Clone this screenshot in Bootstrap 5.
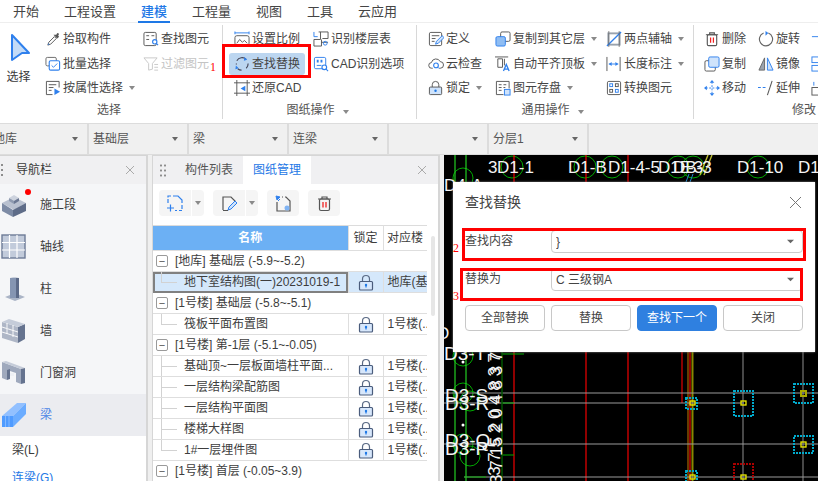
<!DOCTYPE html>
<html lang="zh">
<head>
<meta charset="utf-8">
<title>查找替换</title>
<link rel="stylesheet" href="https://cdn.jsdelivr.net/npm/bootstrap@5.3.0/dist/css/bootstrap.min.css">
<style>
html,body{width:818px;height:481px;overflow:hidden;margin:0}
body{font-family:"Liberation Sans","Noto Sans CJK SC",sans-serif;font-size:12px;color:#3a3a3a;background:#f0f0f0;line-height:1.2}
.app{width:818px;height:481px;overflow:hidden;position:relative}
.defs{position:absolute}
.rtabs{height:23px;background:#fff;padding-left:13px;gap:25px;font-size:13px;border-bottom:1px solid #eee}
.rtab{display:flex;align-items:center;height:23px;color:#444}
.rtab.on{color:#1e78e6;box-shadow:inset 0 -2px 0 #1e78e6;font-weight:500;padding:0 3px;margin:0 -3px}
.ribbon{height:100px;background:#fff;position:relative;overflow:hidden}
.rgroup{flex:none;height:94px;margin-top:2px;position:relative;display:flex;flex-direction:column;border-right:1px solid #d8d8d8}
.rgrid{display:grid;height:73px;grid-template-rows:repeat(3,24.5px);padding-top:2px}
.g1{width:223px}.g1 .rgrid{grid-template-columns:45px 98px 1fr}
.g2{width:194px}.g2 .rgrid{grid-template-columns:79px 1fr;padding-left:11px}
.g3{width:277px}.g3 .rgrid{grid-template-columns:67px 111px 1fr;padding-left:11px}
.g4{width:140px;border-right:0}.g4 .rgrid{grid-template-columns:54px 53px 1fr;padding-left:10px}
.c2r3{grid-column:2;grid-row:3}.c3r1{grid-column:3;grid-row:1}.c3r2{grid-column:3;grid-row:2}
.ritem{display:flex;align-items:center;white-space:nowrap;gap:2px;color:#444}
.ritem svg{flex:none;width:16px;height:16px}
.ritem.off{color:#c4c4c4}
.ritem.hit{background:#bcd6f0;border-radius:3px;margin:1px 0 1px -5px;padding-left:5px;width:76px}
.caret{display:inline-block;width:0;height:0;border:3.5px solid transparent;border-top:4px solid #8a8a8a;border-bottom:0;margin-left:4px}
.rlabel{text-align:center;height:18px;line-height:18px;margin-top:3px;color:#555;padding-right:4px}
.g3 .rlabel{padding-right:5px}
.g4 .rlabel{text-align:right;padding-right:18px}
.bigsel{display:flex;flex-direction:column;align-items:center;grid-row:1 / 4;width:37px}
.bigsel svg{width:24px;height:30px;margin-top:6px;margin-bottom:7px}
.rbox{position:absolute;border:3px solid #f00;pointer-events:none}
.rbox-a{left:222px;top:21px;width:89px;height:34px}
.rbox-b{left:9px;top:46px;width:344px;height:33px}
.rbox-c{left:7px;top:86px;width:343px;height:33px}
.rnum{position:absolute;color:#f00;font-family:"Liberation Serif",serif;font-size:12px;line-height:1}
.rnum-a{left:210px;top:38px}.rnum-b{left:0;top:60px}.rnum-c{left:0;top:108px}
.layerbar{height:32px;background:#f0f0f0;margin-left:-11px;width:840px;border-top:1px solid #dcdcdc;border-bottom:1px solid #dcdcdc}
.layercell{flex:none;width:100px;height:30px;border-right:2px solid #dcdcdc;padding:0 4px;display:flex;align-items:center;justify-content:space-between;color:#555}
.layercell .caret{margin-right:5px;border-top-color:#666}
.main{height:326px;background:#efefef}
.navpane{width:148px;flex:none;background:#f5f6f8;border-top:1px solid #d4d4d4;border-right:2px solid #d6d6d6;overflow:hidden}
.phead{height:28px;background:#f0f0f2;position:relative;display:flex;align-items:center}
.grip{width:2px;height:2px;background:#8d8d8d;box-shadow:0 5px 0 #8d8d8d,0 -5px 0 #8d8d8d;margin-left:1px}
.navtitle{margin-left:13px}
.phead-x{margin-left:auto;width:10px;height:10px;margin-right:11px}
.navrow{height:42px;display:flex;align-items:center;color:#3c3c3c;position:relative}
.navrow svg{width:26px;height:26px;margin-left:1px;margin-right:13px;flex:none}
.navrow svg.reddot{position:absolute;left:25px;top:5px;width:6px;height:6px;margin:0}
.navrow.on{background:#ebecf0;color:#4d86e6}
.subrow{height:28px;background:#fff;display:flex;align-items:center;padding-left:12px}
.sublist{background:#fff;height:100px}
.sublink{color:#1e78e6}
.midpane{width:288px;margin-left:4px;flex:none;background:#fff;border:1px solid #d6d6d6;border-bottom:0;border-right:2px solid #d6d6d6;overflow:hidden;position:relative}
.midtab{height:28px;display:flex;align-items:center;justify-content:center;width:68px;color:#555}
.midtab.on{background:#fff;color:#1e78e6}
.grip2{width:7px;height:14px;margin:0 9px 0 6px;background-image:radial-gradient(circle,#8d8d8d 1px,transparent 1.2px);background-size:4px 5px}
.tools{height:41px;padding:6px 0 0 6px;gap:9px}
.toolbtn{height:26px;width:32px;padding:0;background:#f5f5f5;border:0;border-radius:4px;display:flex;align-items:center;justify-content:center}
.toolbtn svg{width:17px;height:17px}
.toolsplit{width:13px;border-left:1px solid #fff;border-radius:0 4px 4px 0}
.toolsplit .caret{margin:0}
.btn-group .toolbtn.first{border-radius:4px 0 0 4px}
.scrollthumb{position:absolute;right:3px;top:80px;width:4px;height:80px;background:#e6e6e6;border-radius:2px}
.treewrap{width:274px;overflow:hidden}
.tree{table-layout:fixed;width:274px;margin:0;font-size:12px;color:#3d3d3d;border-color:#dcdcdc;--bs-table-bg:transparent}
.tree col:nth-child(1){width:195px}.tree col:nth-child(2){width:35px}.tree col:nth-child(3){width:44px}
.tree td,.tree th{height:21px;padding:0 0 0 4px;vertical-align:middle;white-space:nowrap;overflow:hidden;border-width:0 1px 1px 0;border-color:#dedede;font-weight:400;line-height:20px}
.tree th{height:25px;text-align:center;padding:0}
.tree th.nm{background:#6cb0f4;color:#fff;font-weight:700}
.tree .grp td{padding-left:22px;position:relative;border-right:0}
.tree .grp td::before{content:"−";position:absolute;left:3px;top:4px;width:12px;height:12px;border:1px solid #9a9a9a;border-radius:2px;text-align:center;line-height:10px;font-size:11px;color:#555}
.tree .kid td.nm{padding-left:31px;position:relative}
.tree .kid td.nm::before{content:"";position:absolute;left:8px;top:-1px;bottom:0;border-left:1px solid #d2d2d2}
.tree .kid td.nm::after{content:"";position:absolute;left:8px;width:16px;top:10px;border-top:1px solid #d2d2d2}
.tree .kid.last td.nm::before{bottom:10px}
.tree .sel td{background:#d5e8fb}
.tree .sel td.nm{outline:2px solid #808080;outline-offset:-2px}
.tree td.lk{text-align:center;padding:0}
.tree td.lk svg{width:16px;height:17px;vertical-align:middle}
.cad{flex:1 1 auto;margin-left:4px;background:#000;position:relative;overflow:hidden}
.cad>svg{display:block;width:374px;height:326px}
.cad text{font-family:"Liberation Sans",sans-serif;fill:#f4f4f4}
.dialog{position:absolute;left:9px;top:27px;width:362px;height:170px;background:#fff;border:0;border-radius:0;box-shadow:0 0 2px #888;padding:0 12px}
.dhead{height:40px;display:flex;align-items:center;justify-content:space-between;font-size:14px;color:#444}
.dhead svg{width:13px;height:13px;margin-right:1px}
.dgrid{display:grid;grid-template-columns:repeat(4,80px);column-gap:6px;margin-top:8px}
.dlabel{height:23px;display:flex;align-items:center;color:#444}
.dsel{grid-column:2 / 5;height:23px;padding:0 0 0 4px;font-size:12px;color:#444;border-color:#ccc;border-radius:4px;line-height:20px;font-family:inherit;background-size:7px 7px;background-position:right 8px center;background-image:url("data:image/svg+xml,%3Csvg xmlns='http://www.w3.org/2000/svg' viewBox='0 0 8 8'%3E%3Cpath d='M0 2h8L4 6z' fill='%23666'/%3E%3C/svg%3E")}
.dbtn{height:26px;padding:0;font-size:12px;border-radius:4px;color:#444;border:1px solid #c8c8c8;background:#fff}
.dbtn.go{background:#2f80e0;border-color:#2f80e0;color:#fff}
.gap15{grid-column:1 / 5;height:15px}
.gap14{grid-column:1 / 5;height:14px}
</style>
</head>
<body>
<svg class="defs" width="0" height="0">
<defs>
<symbol id="lock" viewBox="0 0 16 17"><path d="M4.5 8V5a3.5 3.5 0 0 1 7 0v3" fill="none" stroke="#5a6a85" stroke-width="1.2"/><rect x="1.5" y="7.5" width="13" height="8.5" rx="1" fill="#d7e7fb" stroke="#4a5c7c" stroke-width="1.2"/><circle cx="8" cy="11" r="1.2" fill="#1e78e6"/><rect x="7.4" y="11" width="1.2" height="2.5" fill="#1e78e6"/></symbol>
<symbol id="trash" viewBox="0 0 17 17"><path d="M2 4h13M6 4V2h5v2" fill="none" stroke="#555" stroke-width="1.2"/><rect x="3.5" y="4" width="10" height="11.5" rx="1.5" fill="none" stroke="#555" stroke-width="1.2"/><path d="M7 7v5.5M10 7v5.5" stroke="#e22" stroke-width="1.3"/></symbol>
</defs>
</svg>
<div class="app">
<div class="rtabs d-flex">
<div class="rtab">开始</div><div class="rtab">工程设置</div><div class="rtab on">建模</div><div class="rtab">工程量</div><div class="rtab">视图</div><div class="rtab">工具</div><div class="rtab">云应用</div>
</div>

<div class="ribbon d-flex">
 <div class="rgroup g1">
  <div class="rgrid">
   <div class="bigsel"><svg viewBox="0 0 24 30"><path d="M5 2 22 20H15L5 27z" fill="#c3dbf7" stroke="#2f80ed" stroke-width="2" stroke-linejoin="round"/></svg><span>选择</span></div>
   <div class="ritem"><svg viewBox="0 0 17 17"><path d="M3 15l1-3 6-6 2 2-6 6z" fill="#fff" stroke="#555"/><path d="M9 4l4 4 2-2-1-1 1-2-2-1-1 2z" fill="#555"/><path d="M3 15l2-1-1-1z" fill="#2f80ed"/></svg><span>拾取构件</span></div>
   <div class="ritem"><svg viewBox="0 0 17 17"><rect x="1" y="1.5" width="11" height="9" rx="1.5" fill="none" stroke="#666"/><rect x="4.5" y="5" width="11" height="10" rx="1.5" fill="#fff" stroke="#2f80ed" stroke-width="1.2"/><path d="M7 10l2 2 4-4" fill="none" stroke="#2f80ed"/></svg><span>批量选择</span></div>
   <div class="ritem c2r3"><svg viewBox="0 0 17 17"><path d="M15 8V1.5H1.5v14H8" fill="none" stroke="#555"/><path d="M4 5h8M4 8h5M4 11h3" stroke="#555"/><path d="M10 9l6 3.5-6 3.5z" fill="#2f80ed"/></svg><span>按属性选择</span><i class="caret"></i></div>
   <div class="ritem c3r1"><svg viewBox="0 0 17 17"><rect x="1" y="1.5" width="13" height="14" rx="1.5" fill="none" stroke="#555"/><path d="M3.5 5h3M9 5h3M3.5 9h3" stroke="#555"/><circle cx="12.5" cy="11.5" r="2.3" fill="#fff" stroke="#2f80ed" stroke-width="1.2"/><path d="M14 13l2 2" stroke="#2f80ed" stroke-width="1.2"/></svg><span>查找图元</span></div>
   <div class="ritem off c3r2"><svg viewBox="0 0 17 17"><path d="M1 2h14l-5 6v6l-4 1V8z" fill="none" stroke="#c8c8c8"/><path d="M12 9h4M12 12h4M12 15h4" stroke="#c8c8c8"/></svg><span>过滤图元</span></div>
  </div>
  <div class="rlabel">选择</div>
 </div>

 <div class="rgroup g2">
  <div class="rgrid">
   <div class="ritem"><svg viewBox="0 0 17 17"><path d="M1 2h15M1 0.5v3M16 0.5v3" stroke="#2f80ed"/><rect x="1" y="5" width="15" height="10" rx="2" fill="none" stroke="#555"/><path d="M3 13l3-4 3 3 2-2 3 3" fill="none" stroke="#555"/></svg><span>设置比例</span></div>
   <div class="ritem"><svg viewBox="0 0 17 17"><path d="M6 1h10v7h-6M8 1v8H1v7h8V9M9 12h7" fill="none" stroke="#555"/><path d="M1 1v5h4" fill="none" stroke="#2f80ed"/><circle cx="13" cy="13" r="2" fill="none" stroke="#2f80ed"/></svg><span>识别楼层表</span></div>
   <div class="ritem hit"><svg viewBox="0 0 17 17"><path d="M13 3.5A6.5 6.5 0 0 0 3 5M2.5 8v1M4 13.5A6.5 6.5 0 0 0 8 15M15 8a6.5 6.5 0 0 1-2 5" fill="none" stroke="#445" stroke-width="1.2"/><path d="M11 1l3 3-3.5 1zM2 10l3 3-3.5 1z" fill="#2f80ed"/></svg><span>查找替换</span></div>
   <div class="ritem"><svg viewBox="0 0 17 17"><rect x="1.5" y="1.5" width="12" height="12" rx="1.5" fill="none" stroke="#2f80ed"/><path d="M4 10h5" stroke="#2f80ed"/><circle cx="12" cy="12" r="2.5" fill="#fff" stroke="#2f80ed" stroke-width="1.2"/><path d="M14 14l2 2" stroke="#2f80ed" stroke-width="1.2"/><path d="M4 4h2v3H4zM8 4h2v3H8z" fill="#2f80ed"/></svg><span>CAD识别选项</span></div>
   <div class="ritem"><svg viewBox="0 0 17 17"><path d="M0 3h17M0 14h17M3 0v17M14 0v17" stroke="#555"/><path d="M12 6 7 9l5 3z" fill="#2f80ed"/></svg><span>还原CAD</span></div>
  </div>
  <div class="rlabel">图纸操作<i class="caret ms-2"></i></div>
 </div>

 <div class="rgroup g3">
  <div class="rgrid">
   <div class="ritem"><svg viewBox="0 0 17 17"><rect x="1.5" y="1.5" width="13" height="14" rx="1.5" fill="none" stroke="#555"/><path d="M4 5h8M4 8h4M4 11h3" stroke="#555"/><path d="M8 14l1-3 6-6 2 2-6 6z" fill="#cfe3fb" stroke="#2f80ed"/></svg><span>定义</span></div>
   <div class="ritem"><svg viewBox="0 0 17 17"><rect x="6" y="1" width="10" height="10" rx="1.5" fill="#fff" stroke="#555"/><rect x="1" y="6" width="10" height="10" rx="1.5" fill="#8fbdf3" stroke="#2f80ed"/></svg><span>复制到其它层</span><i class="caret"></i></div>
   <div class="ritem"><svg viewBox="0 0 17 17"><rect x="2.5" y="2.5" width="12" height="12" fill="none" stroke="#9aa3ae" stroke-width="2"/><path d="M1 16 16 1" stroke="#2f80ed" stroke-width="1.4"/><path d="M3 0v17M14 0v17" stroke="#555" stroke-width=".7"/></svg><span>两点辅轴</span><i class="caret"></i></div>
   <div class="ritem"><svg viewBox="0 0 17 17"><path d="M5 13H4a3 3 0 0 1-.4-6A5 5 0 0 1 13 6a3.5 3.5 0 0 1 0 7h-1" fill="none" stroke="#555"/><circle cx="8.5" cy="10" r="2.5" fill="none" stroke="#2f80ed" stroke-width="1.2"/><path d="m10.5 12 1.5 1.5" stroke="#2f80ed"/></svg><span>云检查</span></div>
   <div class="ritem"><svg viewBox="0 0 17 17"><path d="M0 1h14M3 3h5v9H3z" fill="none" stroke="#555"/><path d="M10 3v7" stroke="#555"/><path d="M9 16l3-7 3 7M10 14h4" fill="none" stroke="#2f80ed" stroke-width="1.4"/></svg><span>自动平齐顶板</span><i class="caret"></i></div>
   <div class="ritem"><svg viewBox="0 0 17 17"><path d="M1 1v15M15 1v15" stroke="#555"/><path d="M3 8.5h10" stroke="#2f80ed"/><path d="M3 8.5l3-2v4zM13 8.5l-3-2v4z" fill="#2f80ed"/></svg><span>长度标注</span><i class="caret"></i></div>
   <div class="ritem"><svg viewBox="0 0 17 17"><path d="M4.5 8V5a3.5 3.5 0 0 1 7 0v3" fill="none" stroke="#555"/><rect x="1.5" y="7.5" width="13" height="8" rx="1" fill="#cfe3fb" stroke="#555"/><circle cx="8" cy="11.5" r="1.3" fill="#1e78e6"/></svg><span>锁定</span><i class="caret"></i></div>
   <div class="ritem"><svg viewBox="0 0 17 17"><path d="M15 9V1.5H1.5v14H9" fill="none" stroke="#555"/><path d="M4 5h3M9 5h3M4 8h3M9 8h2M4 11h3" stroke="#555"/><rect x="10" y="10" width="6" height="6" fill="#cfe3fb" stroke="#2f80ed"/></svg><span>图元存盘</span><i class="caret"></i></div>
   <div class="ritem"><svg viewBox="0 0 17 17"><rect x="1.5" y="1.5" width="14" height="14" rx="1.5" fill="none" stroke="#555"/><rect x="4" y="4" width="3" height="3" fill="none" stroke="#2f80ed"/><rect x="10" y="4" width="3" height="3" fill="none" stroke="#555"/><rect x="4" y="10" width="3" height="3" fill="none" stroke="#555"/><rect x="10" y="10" width="3" height="3" fill="none" stroke="#2f80ed"/></svg><span>转换图元</span></div>
  </div>
  <div class="rlabel">通用操作<i class="caret ms-2"></i></div>
 </div>

 <div class="rgroup g4">
  <div class="rgrid">
   <div class="ritem"><svg><use href="#trash"/></svg><span>删除</span></div>
   <div class="ritem"><svg viewBox="0 0 17 17"><path d="M11 2.2A7 7 0 1 1 6 2.2" fill="none" stroke="#666" stroke-width="1.2"/><path d="M8 0l3 2-3 3z" fill="#2f80ed"/></svg><span>旋转</span></div>
   <div class="ritem"><svg viewBox="0 0 17 17"><path d="M1 6h12v3" fill="none" stroke="#2f80ed"/></svg></div>
   <div class="ritem"><svg viewBox="0 0 17 17"><rect x="1" y="5" width="11" height="11" rx="1.5" fill="#fff" stroke="#555"/><rect x="5" y="1" width="11" height="11" rx="1.5" fill="#cfe3fb" stroke="#2f80ed"/></svg><span>复制</span></div>
   <div class="ritem"><svg viewBox="0 0 17 17"><path d="M7 2 1 15h6z" fill="#9aa3ae" stroke="#666"/><path d="M10 2l6 13h-6z" fill="#cfe3fb" stroke="#2f80ed"/></svg><span>镜像</span></div>
   <div class="ritem"><svg viewBox="0 0 17 17"><rect x="1" y="1" width="9" height="6" fill="none" stroke="#2f80ed"/><rect x="1" y="10" width="9" height="6" fill="none" stroke="#2f80ed"/></svg></div>
   <div class="ritem"><svg viewBox="0 0 17 17"><path d="M8.5 2v13M2 8.5h13" stroke="#2f80ed" stroke-dasharray="2 1.5"/><path d="M8.5 0l2.5 3H6zM8.5 17l2.5-3H6zM0 8.5l3-2.5v5zM17 8.5l-3-2.5v5z" fill="#2f80ed"/></svg><span>移动</span></div>
   <div class="ritem"><svg viewBox="0 0 17 17"><path d="M0 8h9" stroke="#2f80ed" stroke-dasharray="3 2" stroke-width="1.2"/><path d="M15 1 10 16" stroke="#555" stroke-width="1.1"/></svg><span>延伸</span></div>
   <div class="ritem"><svg viewBox="0 0 17 17"><rect x="1" y="8" width="8" height="8" fill="none" stroke="#555"/><path d="M3 2v4" stroke="#2f80ed"/></svg></div>
  </div>
  <div class="rlabel">修改</div>
 </div>

 <div class="rbox rbox-a"></div>
 <span class="rnum rnum-a">1</span>
</div>

<div class="layerbar d-flex">
 <div class="layercell"><span>地库</span><i class="caret"></i></div>
 <div class="layercell"><span>基础层</span><i class="caret"></i></div>
 <div class="layercell"><span>梁</span><i class="caret"></i></div>
 <div class="layercell"><span>连梁</span><i class="caret"></i></div>
 <div class="layercell"><span></span><i class="caret"></i></div>
 <div class="layercell"><span>分层1</span><i class="caret"></i></div>
</div>

<div class="main d-flex">
 <div class="navpane">
  <div class="phead"><i class="grip"></i><span class="navtitle">导航栏</span><svg class="phead-x" viewBox="0 0 10 10"><path d="M1 1l8 8M9 1 1 9" stroke="#aaa"/></svg></div>
  <div class="navrow"><svg viewBox="0 0 26 26"><path d="M1 11 13 5l12 6-12 7z" fill="#b9c1d0"/><path d="M1 11v8l11 6v-7z" fill="#7d8ba5"/><path d="M25 11v8l-13 6v-7z" fill="#5e6c88"/><path d="M8 6l5-3 5 3-5 3z" fill="#cdd3de"/><path d="M8 6v3l5 3V9z" fill="#8e9ab0"/><path d="M18 6v3l-5 3V9z" fill="#6b7893"/></svg><span>施工段</span><svg class="reddot" viewBox="0 0 6 6"><circle cx="3" cy="3" r="3" fill="#f00"/></svg></div>
  <div class="navrow"><svg viewBox="0 0 26 26"><rect x="1" y="1" width="23" height="23" fill="#c2cbdb" stroke="#6d7b97" stroke-width="1.4"/><path d="M8.5 1v23M16 1v23M1 8.5h23M1 16h23" stroke="#fff" stroke-width="1.2"/></svg><span>轴线</span></div>
  <div class="navrow"><svg viewBox="0 0 26 26"><path d="M4 21 14 17l10 4-10 4z" fill="#aab4c6"/><rect x="9" y="2" width="6" height="20" fill="#8595b2"/><rect x="15" y="2" width="3" height="20" fill="#5c6a88"/><path d="M9 2l3-1h6l-3 1z" fill="#c8cfdc"/></svg><span>柱</span></div>
  <div class="navrow"><svg viewBox="0 0 26 26"><path d="M1 4 17 9v16L1 20z" fill="#aeb6c6"/><path d="M17 9l7-3v15l-7 4z" fill="#65738f"/><path d="M1 4l7-3 16 5-7 3z" fill="#c5ccd9"/><path d="M1 9l16 5M1 14l16 5M6 5v5M12 7v6M6 11v5M12 13v6" stroke="#fff" stroke-width=".9"/></svg><span>墙</span></div>
  <div class="navrow"><svg viewBox="0 0 26 26"><path d="M1 2 20 9v15l-5-2V13L6 10v10l-5-2z" fill="#9fa9bd"/><path d="M1 2l4-1 19 7-4 1z" fill="#c5ccd9"/><path d="M20 9l4-1v15l-4 1z" fill="#65738f"/><rect x="9" y="13" width="4" height="3" fill="#eef0f4"/><path d="M6 10v10l3-1V9z" fill="#65738f"/></svg><span>门窗洞</span></div>
  <div class="navrow on"><svg viewBox="0 0 26 26"><path d="M1 14 16 1h9L12 14z" fill="#92c0ff"/><path d="M1 14h11v11H1z" fill="#4f9bff"/><path d="M12 14 25 1v11L12 25z" fill="#6bacff"/><path d="M4.5 14v11M8 14v11" stroke="#92c0ff" stroke-width=".8"/></svg><span>梁</span></div>
  <div class="sublist"><div class="subrow">梁(L)</div><div class="subrow sublink">连梁(G)</div></div>
 </div>

 <div class="midpane">
  <div class="phead"><i class="grip2"></i><div class="midtab">构件列表</div><div class="midtab on">图纸管理</div><svg class="phead-x" viewBox="0 0 10 10"><path d="M1 1l8 8M9 1 1 9" stroke="#aaa"/></svg></div>
  <div class="tools d-flex">
   <div class="btn-group"><button type="button" class="toolbtn first"><svg viewBox="0 0 17 17"><path d="M1 8V4M1 2.5V1h3M6 1h5l4 4v3M15 10v4M15 15.500h-3M10 15.500H8" fill="none" stroke="#2f80ed" stroke-width="1.2"/><path d="M0 13h7M3.500 9.500v7" stroke="#2f80ed" stroke-width="1.200"/></svg></button><button type="button" class="toolbtn toolsplit"><i class="caret"></i></button></div>
   <div class="btn-group"><button type="button" class="toolbtn first"><svg viewBox="0 0 17 17"><path d="M2 15V2h8l4 4v1M2 15.500h5" fill="none" stroke="#555" stroke-width="1.2"/><path d="M7 15l1-3 6-6 2 2-6 6z" fill="#cfe3fb" stroke="#2f80ed"/></svg></button><button type="button" class="toolbtn toolsplit"><i class="caret"></i></button></div>
   <button type="button" class="toolbtn"><svg viewBox="0 0 17 17"><path d="M7 2h1M10 2h1l4 4v10H2V7" fill="none" stroke="#555" stroke-width="1.2"/><path d="M1 1l4 1-3 3zM5 4 3 6" fill="#2f80ed" stroke="#2f80ed"/><circle cx="12" cy="13" r="2.500" fill="#7fb3f3"/></svg></button>
   <button type="button" class="toolbtn"><svg><use href="#trash"/></svg></button>
  </div>
  <div class="treewrap">
  <table class="table table-bordered tree">
   <colgroup><col><col><col></colgroup>
   <thead><tr><th class="nm">名称</th><th>锁定</th><th>对应楼</th></tr></thead>
   <tbody>
    <tr class="grp"><td colspan="3">[地库] 基础层 (-5.9~-5.2)</td></tr>
    <tr class="kid last sel"><td class="nm">地下室结构图(一)20231019-1</td><td class="lk"><svg><use href="#lock"/></svg></td><td>地库(基</td></tr>
    <tr class="grp"><td colspan="3">[1号楼] 基础层 (-5.8~-5.1)</td></tr>
    <tr class="kid last"><td class="nm">筏板平面布置图</td><td class="lk"><svg><use href="#lock"/></svg></td><td>1号楼(..</td></tr>
    <tr class="grp"><td colspan="3">[1号楼] 第-1层 (-5.1~-0.05)</td></tr>
    <tr class="kid"><td class="nm">基础顶~一层板面墙柱平面...</td><td class="lk"><svg><use href="#lock"/></svg></td><td>1号楼(..</td></tr>
    <tr class="kid"><td class="nm">一层结构梁配筋图</td><td class="lk"><svg><use href="#lock"/></svg></td><td>1号楼(..</td></tr>
    <tr class="kid"><td class="nm">一层结构平面图</td><td class="lk"><svg><use href="#lock"/></svg></td><td>1号楼(..</td></tr>
    <tr class="kid"><td class="nm">楼梯大样图</td><td class="lk"><svg><use href="#lock"/></svg></td><td>1号楼(..</td></tr>
    <tr class="kid last"><td class="nm">1#一层埋件图</td><td class="lk"><svg><use href="#lock"/></svg></td><td>1号楼(..</td></tr>
    <tr class="grp"><td colspan="3">[1号楼] 首层 (-0.05~3.9)</td></tr>
   </tbody>
  </table>
  </div>
  <div class="scrollthumb"></div>
 </div>

 <div class="cad">
  <svg viewBox="444 155 374 326">
   <g stroke="#0a0" fill="none" stroke-width="1">
    <circle cx="512" cy="167" r="11"/><circle cx="585" cy="167" r="11"/><circle cx="612" cy="167" r="11"/><circle cx="678" cy="167" r="11"/><circle cx="693" cy="167" r="11"/><circle cx="758" cy="167" r="11"/>
    <circle cx="463" cy="178" r="10"/><circle cx="463" cy="356" r="10"/><circle cx="463" cy="393" r="10"/><circle cx="470" cy="401" r="10"/><circle cx="463" cy="444" r="10"/><circle cx="470" cy="456" r="10"/>
   </g>
   <g stroke-width="1.2">
    <path d="M514 155v326M586 155v326M628 155v326" stroke="#e00"/>
    <path d="M682 352v51" stroke="#800" stroke-width="2"/>
    <path d="M455 155v326M466 155v326" stroke="#2c2"/>
    <path d="M743 352v129M803 352v129" stroke="#666" stroke-width="1.4"/>
    <path d="M688 352v129" stroke="#a60"/><path d="M690 352v129" stroke="#e00"/><path d="M692.5 352v129" stroke="#880" stroke-width="2"/>
    <path d="M444 393h374M444 403h300M444 444h374M464 477h354" stroke="#999" stroke-width="1.2"/>
    <path d="M502 354h22M502 403h12M502 455h12M464 477h22" stroke="#0a0"/>
    <path d="M502 340v140" stroke="#050" stroke-width="1.5"/>
   </g>
   <g fill="none" stroke="#0ac" stroke-width="2" stroke-dasharray="2 1">
    <rect x="686" y="398" width="11" height="11"/><rect x="734" y="391" width="19" height="25"/><rect x="794" y="384" width="19" height="19"/><rect x="794" y="436" width="19" height="17"/><rect x="686" y="471" width="11" height="11"/>
   </g>
   <rect x="734" y="464" width="19" height="22" fill="none" stroke="#a00" stroke-width="2" stroke-dasharray="2 1"/>
   <g fill="none" stroke="#ee0" stroke-width="1.3"><rect x="690" y="401" width="5" height="4"/><rect x="741" y="401" width="5" height="4"/><rect x="801" y="391" width="5" height="5" stroke="#aa0" stroke-width="2"/><rect x="801" y="442" width="5" height="5"/><rect x="690" y="475" width="5" height="4"/><rect x="741" y="475" width="5" height="4"/></g>
   <path d="M700 175 708 155M704 175 712 155" stroke="#bb3" stroke-width="1.4"/><path d="M690 182l3-8M686 182l3-8" stroke="#28c"/>
   <g font-size="17">
    <text x="488" y="173">3</text><text x="497" y="173">D1-1</text><text x="568" y="173">D1-B</text><text x="608" y="173">D1-4-5</text><text x="658" y="173">D1E</text><text x="673" y="173">DB-3</text><text x="688" y="173">-3</text><text x="737" y="173">D1-10</text><text x="798" y="173">D1</text>
    <text x="444" y="191">D4-A</text><text x="437" y="339">D</text>
   </g>
   <g font-size="19">
    <text x="444" y="360">D3-T</text><text x="445" y="402">D3-S</text><text x="445" y="410">D3-R</text><text x="445" y="447">D3-Q</text><text x="445" y="455">D3-P</text>
   </g>
   <g font-size="17">
    <text transform="translate(502 481) rotate(-90)" x="-3">3 7 15 2 0 4 8 3 7 15 2 0 4 8 7 3</text>
    <text transform="translate(500 481) rotate(-90)" x="-9">8 3 7 5 2 0 4 8 3 7 5 2 0 4 8 7 2</text>
   </g>
   <circle cx="463" cy="362" r="1.5" fill="#fff"/><circle cx="463" cy="425" r="1.5" fill="#fff"/>
  </svg>
  <div class="card dialog">
   <div class="dhead"><span>查找替换</span><svg viewBox="0 0 13 13"><path d="M1 1l11 11M12 1 1 12" stroke="#777" stroke-width="1"/></svg></div>
   <div class="dgrid">
    <div class="dlabel">查找内容</div>
    <select class="form-select dsel" aria-label="查找内容"><option>}</option></select>
    <div class="gap15"></div>
    <div class="dlabel">替换为</div>
    <select class="form-select dsel" aria-label="替换为"><option>C 三级钢A</option></select>
    <div class="gap14"></div>
    <button type="button" class="btn dbtn">全部替换</button>
    <button type="button" class="btn dbtn">替换</button>
    <button type="button" class="btn dbtn go">查找下一个</button>
    <button type="button" class="btn dbtn">关闭</button>
   </div>
   <div class="rbox rbox-b"></div>
   <div class="rbox rbox-c"></div>
   <span class="rnum rnum-b">2</span>
   <span class="rnum rnum-c">3</span>
  </div>
 </div>
</div>
</div>
</body>
</html>
